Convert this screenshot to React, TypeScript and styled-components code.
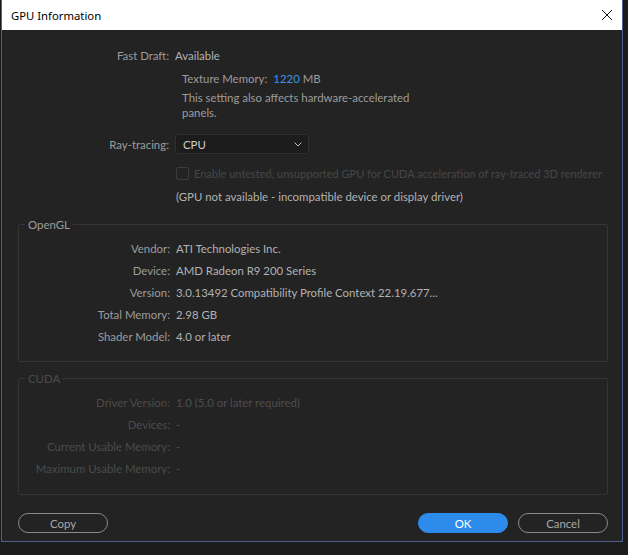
import React from 'react';
import styled, { createGlobalStyle } from 'styled-components';

const GlobalStyle = createGlobalStyle`
  html, body {
    margin: 0;
    padding: 0;
    background: #1b1b1c;
  }
`;

const Page = styled.div`
  width: 628px;
  height: 555px;
  overflow: hidden;
  background: #1b1b1c;
`;

const Dialog = styled.div`
  width: 620px;
  margin-left: 1px;
  border: 1px solid #4c5d8e;
  border-top: none;
  background: #232323;
  font-family: Lato, 'Open Sans', sans-serif;
  font-size: 11.4px;
  color: #9c9c9c;
`;

const TitleBar = styled.div`
  height: 30px;
  background: #ffffff;
  display: flex;
  align-items: center;
  justify-content: space-between;
  padding: 0 9px 0 9px;
  font-family: 'Noto Sans', 'Open Sans', sans-serif;
  font-size: 11.3px;
  color: #000;
`;

const CloseIcon = () => (
  <svg width="12" height="12" viewBox="0 0 12 12">
    <path d="M1 1 L11 11 M11 1 L1 11" stroke="#111" strokeWidth="1" fill="none" />
  </svg>
);

const Body = styled.div`
  padding: 14px 14px 8px 16px;
`;

const FieldGrid = styled.div<{ $row?: number }>`
  display: grid;
  grid-template-columns: 151px 1fr;
  column-gap: 6px;
  grid-auto-rows: ${(p) => p.$row ?? 22}px;
  align-items: center;
`;

const Label = styled.span<{ $off?: boolean }>`
  text-align: right;
  white-space: nowrap;
  color: ${(p) => (p.$off ? '#4b4b4b' : '#9c9c9c')};
`;

const Value = styled.span<{ $off?: boolean }>`
  white-space: nowrap;
  color: ${(p) => (p.$off ? '#4e4e4e' : '#b2b2b2')};
`;

const Indented = styled.div`
  margin-left: 164px;
  line-height: 15px;
  color: #9c9c9c;
`;

const TextureLine = styled.div`
  margin-top: 5px;
  margin-bottom: 4px;
  color: #9c9c9c;
`;

const Accent = styled.span`
  color: #3f94e6;
  margin: 0 3px 0 6px;
`;

const Row = styled.div<{ $top: number }>`
  display: flex;
  align-items: center;
  margin-top: ${(p) => p.$top}px;
`;

const Select = styled.div`
  width: 134px;
  height: 20px;
  box-sizing: border-box;
  background: #1c1c1c;
  border: 1px solid #2f2f2f;
  border-radius: 2px;
  display: flex;
  align-items: center;
  justify-content: space-between;
  padding: 0 6px 0 7px;
  color: #cfcfcf;
`;

const Chevron = () => (
  <svg width="8" height="5" viewBox="0 0 8 5">
    <path d="M0.5 0.5 L4 4 L7.5 0.5" stroke="#bdbdbd" strokeWidth="1" fill="none" />
  </svg>
);

const CheckBox = styled.span`
  width: 13px;
  height: 13px;
  box-sizing: border-box;
  border: 1px solid #3c3c3c;
  border-radius: 2px;
  margin-right: 5px;
`;

const Indent = styled.div`
  margin-left: 158px;
  display: flex;
  align-items: center;
`;

const Muted = styled.span`
  color: #474747;
  font-size: 11px;
  white-space: nowrap;
`;

const Note = styled.div`
  margin-left: 158px;
  margin-top: 9px;
  line-height: 15px;
  color: #b2b2b2;
`;

const Group = styled.fieldset<{ $top: number }>`
  margin: ${(p) => p.$top}px 0 0 0;
  padding: 0 0 ${(p) => (p.$top > 10 ? 14 : 15)}px 0;
  border: 1px solid #353535;
  border-radius: 2px;
  min-width: 0;
`;

const Legend = styled.legend<{ $off?: boolean }>`
  margin-left: 6px;
  padding: 0 3px;
  line-height: 15px;
  color: ${(p) => (p.$off ? '#4b4b4b' : '#9c9c9c')};
`;

const GroupRows = styled(FieldGrid)`
  margin-top: 5px;
`;

const Buttons = styled.div`
  display: flex;
  align-items: center;
  gap: 10px;
  margin-top: 18px;
`;

const Spacer = styled.div`
  flex: 1;
`;

const Button = styled.button<{ $primary?: boolean }>`
  width: 90px;
  height: 20px;
  border-radius: 10px;
  font-family: inherit;
  font-size: 11.4px;
  padding: 0;
  border: 1px solid ${(p) => (p.$primary ? '#2d8ceb' : '#8a8a8a')};
  background: ${(p) => (p.$primary ? '#2d8ceb' : 'transparent')};
  color: ${(p) => (p.$primary ? '#ffffff' : '#a8a8a8')};
`;

const openGL: [string, string][] = [
  ['Vendor:', 'ATI Technologies Inc.'],
  ['Device:', 'AMD Radeon R9 200 Series'],
  ['Version:', '3.0.13492 Compatibility Profile Context 22.19.677...'],
  ['Total Memory:', '2.98 GB'],
  ['Shader Model:', '4.0 or later'],
];

const cuda: [string, string][] = [
  ['Driver Version:', '1.0 (5.0 or later required)'],
  ['Devices:', '-'],
  ['Current Usable Memory:', '-'],
  ['Maximum Usable Memory:', '-'],
];

const App = (): JSX.Element => (
  <Page>
    <GlobalStyle />
    <Dialog>
      <TitleBar>
        <span>GPU Information</span>
        <CloseIcon />
      </TitleBar>
      <Body>
        <FieldGrid>
          <Label>Fast Draft:</Label>
          <Value>Available</Value>
        </FieldGrid>
        <Indented>
          <TextureLine>
            Texture Memory:<Accent>1220</Accent>MB
          </TextureLine>
          This setting also affects hardware-accelerated
          <br />
          panels.
        </Indented>
        <Row $top={14}>
          <FieldGrid $row={20}>
            <Label>Ray-tracing:</Label>
            <Select>
              <span>CPU</span>
              <Chevron />
            </Select>
          </FieldGrid>
        </Row>
        <Row $top={13}>
          <Indent>
            <CheckBox />
            <Muted>Enable untested, unsupported GPU for CUDA acceleration of ray-traced 3D renderer</Muted>
          </Indent>
        </Row>
        <Note>(GPU not available - incompatible device or display driver)</Note>

        <Group $top={13}>
          <Legend>OpenGL</Legend>
          <GroupRows>
            {openGL.map(([k, v]) => (
              <React.Fragment key={k}>
                <Label>{k}</Label>
                <Value>{v}</Value>
              </React.Fragment>
            ))}
          </GroupRows>
        </Group>

        <Group $top={9}>
          <Legend $off>CUDA</Legend>
          <GroupRows>
            {cuda.map(([k, v]) => (
              <React.Fragment key={k}>
                <Label $off>{k}</Label>
                <Value $off>{v}</Value>
              </React.Fragment>
            ))}
          </GroupRows>
        </Group>

        <Buttons>
          <Button>Copy</Button>
          <Spacer />
          <Button $primary>OK</Button>
          <Button>Cancel</Button>
        </Buttons>
      </Body>
    </Dialog>
  </Page>
);

export default App;
